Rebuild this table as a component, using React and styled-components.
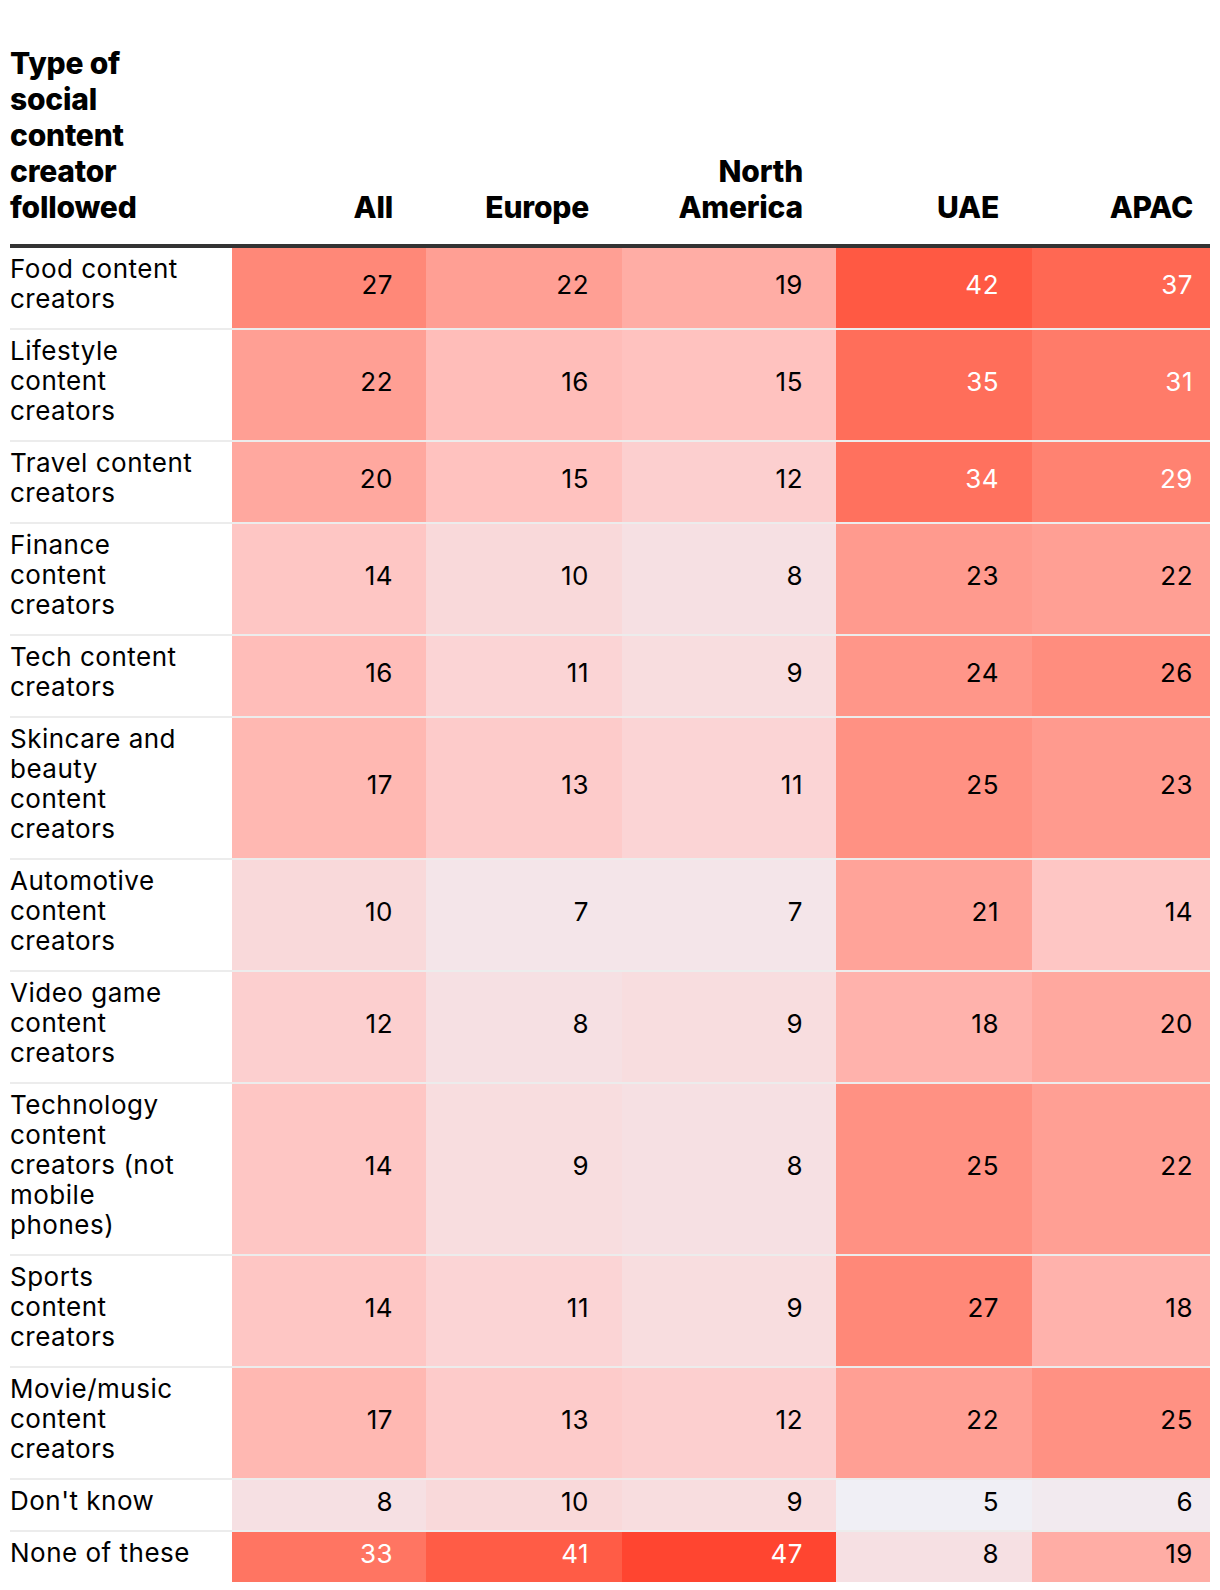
import React from 'react'
import styled, { createGlobalStyle } from 'styled-components'

const GlobalStyle = createGlobalStyle`
  body {
    margin: 0;
    background: #fff;
    font-family: Inter, "Open Sans", sans-serif;
    color: #000;
  }
`

const TEMPLATE = '222px 194px 196px 214px 196px 178px'

const columns = [['All'], ['Europe'], ['North', 'America'], ['UAE'], ['APAC']]

const rows = [
  { label: ['Food content', 'creators'], values: [27, 22, 19, 42, 37] },
  { label: ['Lifestyle', 'content', 'creators'], values: [22, 16, 15, 35, 31] },
  { label: ['Travel content', 'creators'], values: [20, 15, 12, 34, 29] },
  { label: ['Finance', 'content', 'creators'], values: [14, 10, 8, 23, 22] },
  { label: ['Tech content', 'creators'], values: [16, 11, 9, 24, 26] },
  { label: ['Skincare and', 'beauty', 'content', 'creators'], values: [17, 13, 11, 25, 23] },
  { label: ['Automotive', 'content', 'creators'], values: [10, 7, 7, 21, 14] },
  { label: ['Video game', 'content', 'creators'], values: [12, 8, 9, 18, 20] },
  {
    label: ['Technology', 'content', 'creators (not', 'mobile', 'phones)'],
    values: [14, 9, 8, 25, 22],
  },
  { label: ['Sports', 'content', 'creators'], values: [14, 11, 9, 27, 18] },
  { label: ['Movie/music', 'content', 'creators'], values: [17, 13, 12, 22, 25] },
  { label: ["Don't know"], values: [8, 10, 9, 5, 6] },
  { label: ['None of these'], values: [33, 41, 47, 8, 19] },
]

// colour stops picked off the reference
const stops = [
  [5, [240, 239, 245]],
  [8, [246, 224, 227]],
  [10, [249, 217, 218]],
  [12, [252, 207, 207]],
  [15, [255, 194, 191]],
  [20, [255, 168, 159]],
  [27, [255, 136, 120]],
  [35, [255, 110, 90]],
  [42, [255, 89, 67]],
  [47, [255, 69, 48]],
]

const heat = v => {
  for (let i = 0; i < stops.length - 1; i++) {
    const [a, ca] = stops[i]
    const [b, cb] = stops[i + 1]
    if (v <= b) {
      const t = Math.max(0, (v - a) / (b - a))
      const c = ca.map((x, k) => Math.round(x + (cb[k] - x) * t))
      return `rgb(${c.join(',')})`
    }
  }
  return `rgb(${stops[stops.length - 1][1].join(',')})`
}

const Page = styled.div`
  padding: 45px 10px 6px 10px;
`

const Table = styled.div`
  width: 1200px;
`

const HeadRow = styled.div`
  display: grid;
  grid-template-columns: ${TEMPLATE};
  align-items: end;
  padding-bottom: 19px;
  border-bottom: 4px solid #333;
`

const Title = styled.div`
  font-size: 30px;
  line-height: 36px;
  font-weight: 800;
  letter-spacing: -0.2px;
`

const ColHead = styled.div`
  font-size: 30px;
  line-height: 36px;
  font-weight: 800;
  text-align: right;
  padding-right: ${p => (p.$last ? '17px' : '33px')};
  letter-spacing: -0.2px;
`

const Row = styled.div`
  display: grid;
  grid-template-columns: ${TEMPLATE};
  border-bottom: 2px solid rgba(0, 0, 0, 0.075);

  &:last-child {
    border-bottom: none;
  }
`

const Label = styled.div`
  font-size: 26px;
  line-height: 30px;
  padding: 6px 0 14px;
  letter-spacing: 0.5px;
`

const Cell = styled.div`
  display: flex;
  align-items: center;
  justify-content: flex-end;
  padding: 0 ${p => (p.$last ? '17px' : '33px')} 8px 0;
  font-size: 26px;
  letter-spacing: 0.5px;
  color: ${p => (p.$light ? '#fff' : '#000')};
`

const Lines = ({ lines }) =>
  lines.map((line, i) => (
    <React.Fragment key={i}>
      {line}
      {i < lines.length - 1 && <br />}
    </React.Fragment>
  ))

const App = () => {
  return (
    <Page>
      <GlobalStyle />
      <Table>
        <HeadRow>
          <Title>
            <Lines lines={['Type of', 'social', 'content', 'creator', 'followed']} />
          </Title>
          {columns.map((col, i) => (
            <ColHead key={i} $last={i === columns.length - 1}>
              <Lines lines={col} />
            </ColHead>
          ))}
        </HeadRow>
        {rows.map((row, r) => (
          <Row key={r}>
            <Label>
              <Lines lines={row.label} />
            </Label>
            {row.values.map((v, i) => (
              <Cell
                key={i}
                $last={i === row.values.length - 1}
                $light={v >= 29}
                style={{ background: heat(v) }}
              >
                {v}
              </Cell>
            ))}
          </Row>
        ))}
      </Table>
    </Page>
  )
}

export default App
